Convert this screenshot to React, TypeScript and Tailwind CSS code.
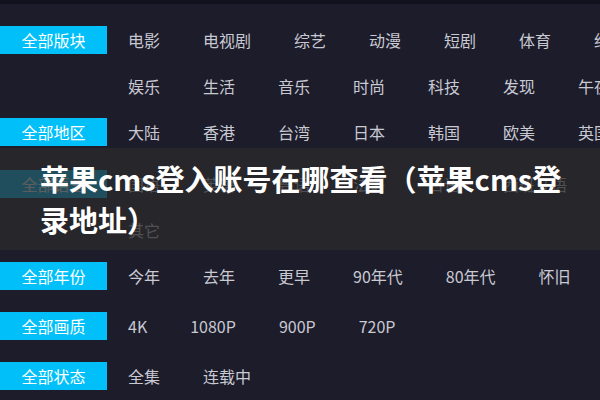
const groups = [
	{ label: "全部版块", mt: "mt-[13px]", lines: [["电影", "电视剧", "综艺", "动漫", "短剧", "体育", "纪录片"], ["娱乐", "生活", "音乐", "时尚", "科技", "发现", "午夜"]] },
	{ label: "全部地区", mt: "mt-0", lines: [["大陆", "香港", "台湾", "日本", "韩国", "欧美", "英国"]] },
	{ label: "全部语言", mt: "mt-[6px]", lines: [["国语", "英语", "粤语", "法语", "日语", "西班牙语"], ["其它"]] },
	{ label: "全部年份", mt: "mt-0", lines: [["今年", "去年", "更早", "90年代", "80年代", "怀旧"]] },
	{ label: "全部画质", mt: "mt-[4px]", lines: [["4K", "1080P", "900P", "720P"]] },
	{ label: "全部状态", mt: "mt-[4px]", lines: [["全集", "连载中"]] },
];

export default function App() {
	return (
		<div
			className="relative w-[600px] h-[400px] overflow-hidden bg-[#1c1c2b] text-[16px]"
			style={{ fontFamily: '"Noto Sans CJK SC", "Noto Sans", sans-serif' }}
		>
			<div className="h-[4px] bg-[#12121e]" />

			{groups.map((group) => (
				<div key={group.label} className={`flex ${group.mt}`}>
					<div className="w-[107px] shrink-0 h-[46px] flex items-center">
						<div className="w-full h-[28px] bg-[#00bff9] text-white flex items-center justify-center">
							{group.label}
						</div>
					</div>
					<div className="pl-[21px]">
						{group.lines.map((line, i) => (
							<div key={i} className="flex h-[46px] items-center whitespace-nowrap text-[#c9c9d2]">
								{line.map((item) => (
									<span key={item} className="mr-[43px]">{item}</span>
								))}
							</div>
						))}
					</div>
				</div>
			))}

			{/* title overlay */}
			<div className="absolute left-0 right-0 top-[148px] h-[102px] bg-[rgba(42,42,44,0.76)] flex items-center">
				<h1 className="pl-[40px] pr-[30px] text-white font-bold text-[29px] leading-[41px]">
					苹果cms登入账号在哪查看（苹果cms登录地址）
				</h1>
			</div>
		</div>
	);
}
